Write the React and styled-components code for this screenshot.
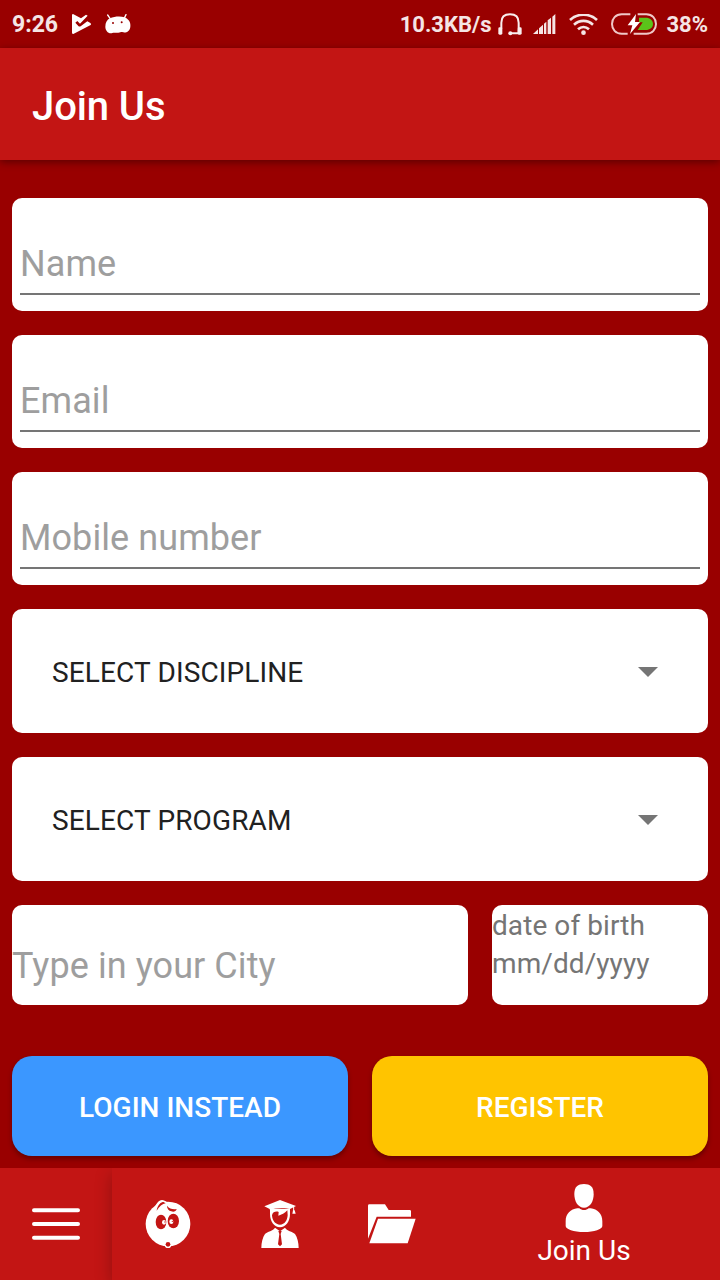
import React from "react";
import styled, { createGlobalStyle } from "styled-components";

const GlobalStyle = createGlobalStyle`
  * { box-sizing: border-box; }
  body { margin: 0; background: #990000; font-family: Roboto, "Liberation Sans", sans-serif; }
`;

const Screen = styled.div`
  width: 720px;
  height: 1280px;
  display: flex;
  flex-direction: column;
  background: #990000;
  overflow: hidden;
`;

const StatusBar = styled.header`
  height: 48px;
  flex: none;
  display: flex;
  align-items: center;
  padding: 2px 12px 0;
  color: #f5e5e5;
`;

const StatusText = styled.span`
  font-size: ${(p) => p.$size || 22}px;
  font-weight: 700;
  line-height: 28px;
  white-space: nowrap;
  margin-left: ${(p) => p.$gap || 0}px;
`;

const StatusGroup = styled.div`
  display: flex;
  align-items: center;
  margin-left: ${(p) => (p.$end ? "auto" : "0")};
`;

const StatusIcon = styled.svg`
  display: block;
  flex: none;
  margin-top: -2px;
  margin-left: ${(p) => p.$gap}px;
`;

const AppBar = styled.div`
  position: relative;
  height: 112px;
  flex: none;
  display: flex;
  align-items: center;
  padding: 6px 32px 0;
  background: #c31514;
  box-shadow: 0 2px 8px rgba(0, 0, 0, 0.42);
`;

const Title = styled.h1`
  margin: 0;
  font-size: 40px;
  line-height: 48px;
  font-weight: 500;
  letter-spacing: -0.1px;
  color: #fff;
`;

const Form = styled.main`
  flex: 1;
  display: flex;
  flex-direction: column;
  gap: 24px;
  padding: 38px 12px 12px;
`;

const Card = styled.div`
  background: #fff;
  border-radius: 10px;
`;

const Field = styled(Card)`
  height: 113px;
  padding: 45px 8px 0;
`;

const Hint = styled.div`
  font-size: 36px;
  line-height: 42px;
  letter-spacing: 0.08px;
  color: #9e9e9e;
  white-space: nowrap;
`;

const UnderlinedHint = styled(Hint)`
  height: 52px;
  border-bottom: 2px solid #757575;
`;

const Select = styled(Card)`
  height: 124px;
  display: flex;
  align-items: center;
  justify-content: space-between;
  padding: 0 50px 0 40px;
  font-size: 28px;
  line-height: 34px;
  letter-spacing: 0.13px;
  color: #212121;
`;

const SelectLabel = styled.span`
  padding-top: 4px;
`;

const Caret = styled.svg`
  display: block;
  margin-top: 2px;
`;

const Row = styled.div`
  display: flex;
  gap: 24px;
`;

const CityField = styled(Card)`
  width: 456px;
  height: 100px;
  padding-top: 40px;
`;

const DateField = styled(Card)`
  flex: 1;
  height: 100px;
  padding-top: 2px;
  font-size: 28px;
  line-height: 38px;
  letter-spacing: 0.08px;
  color: #757575;
`;

const Actions = styled(Row)`
  margin-top: 27px;
`;

const ActionButton = styled.button`
  flex: 1;
  height: 100px;
  padding: 3px 0 0;
  border: 0;
  border-radius: 20px;
  background: ${(p) => p.$color};
  box-shadow: 0 3px 5px rgba(0, 0, 0, 0.32);
  color: #fff;
  font-family: inherit;
  font-size: 28px;
  font-weight: 500;
  line-height: 34px;
`;

const BottomBar = styled.nav`
  position: relative;
  height: 112px;
  flex: none;
  display: flex;
  background: #c31514;
  color: #fff;
  overflow: hidden;
`;

const MenuButton = styled.div`
  width: 112px;
  display: flex;
  align-items: center;
  justify-content: center;
`;

const Tabs = styled.div`
  flex: 1;
  display: flex;
  background: #c31514;
  box-shadow: 0 6px 16px rgba(0, 0, 0, 0.26);
`;

const Tab = styled.div`
  width: ${(p) => (p.$active ? "272px" : "112px")};
  display: flex;
  flex-direction: column;
  align-items: center;
  justify-content: ${(p) => (p.$active ? "flex-start" : "center")};
  padding-top: ${(p) => (p.$active ? "16px" : "0")};
`;

const TabLabel = styled.span`
  margin-top: 2px;
  font-size: 28px;
  line-height: 34px;
`;

const TabIcon = styled.svg.attrs({ width: 48, height: 48, viewBox: "0 0 144 144" })`
  display: block;
  overflow: visible;
`;

const RED = "#c31514";

const SelectBox = ({ label }) => (
  <Select>
    <SelectLabel>{label}</SelectLabel>
    <Caret width="20" height="10" viewBox="0 0 20 10">
      <path d="M0 0H20L10 10Z" fill="#757575" />
    </Caret>
  </Select>
);

const TextField = ({ label }) => (
  <Field>
    <UnderlinedHint>{label}</UnderlinedHint>
  </Field>
);

export default function App() {
  return (
    <>
      <GlobalStyle />
      <Screen>
        <StatusBar>
          <StatusGroup>
            <StatusText $size={23}>9:26</StatusText>
            <StatusIcon $gap={14} width="20" height="20" viewBox="0 0 60 60">
              <path
                d="M3 0Q0 0 0 4V56Q0 60 4 60L56 33Q59 30 55 27L46 22L26 37Q22 39 19 36L10 26L16 21L24 29L47 5L42 2L27 13Z"
                fill="#fff"
              />
            </StatusIcon>
            <StatusIcon $gap={13} width="26" height="20" viewBox="0 0 78 60">
              <path
                d="M8 3L15 13M63 2L58 12"
                stroke="#fff"
                strokeWidth="4"
                strokeLinecap="round"
              />
              <path
                d="M15 13C28 7 47 6 58 10C70 14 78 25 76 38C75 50 65 57 54 55C50 53 47 55 40 56C30 57 27 55 22 57C10 60 1 50 1 38C1 26 6 17 15 13Z"
                fill="#fff"
              />
              <circle cx="24" cy="27" r="3" fill="#990000" />
              <circle cx="50" cy="25" r="3" fill="#990000" />
            </StatusIcon>
          </StatusGroup>
          <StatusGroup $end>
            <StatusText>10.3KB/s</StatusText>
            <StatusIcon $gap={7} width="24" height="23" viewBox="0 0 72 69">
              <path
                d="M10 47V29C10 13 20 4 36 4S62 13 62 29V47M62 49V61H38"
                fill="none"
                stroke="#f9eeee"
                strokeWidth="6"
              />
              <rect x="1" y="43" width="12" height="22" rx="4" fill="#f9eeee" />
              <rect x="59" y="43" width="12" height="22" rx="4" fill="#f9eeee" />
              <circle cx="37" cy="61" r="6" fill="#f9eeee" />
            </StatusIcon>
            <StatusIcon $gap={11} width="23" height="20" viewBox="0 0 69 60">
              <path
                d="M0 60L15 46V60ZM18 43L30 32V60H18ZM33 29L40 23V60H33ZM44 19L54 11V60H44ZM58 8L67 0V60H58Z"
                fill="#f5e5e5"
              />
            </StatusIcon>
            <StatusIcon $gap={13} width="29" height="21" viewBox="0 0 87 63">
              <path
                d="M3 18C26 -3 61 -3 84 18M15 32C32 17 55 17 72 32M27 46C37 37 50 37 60 46"
                fill="none"
                stroke="#f5e5e5"
                strokeWidth="8"
              />
              <circle cx="43.5" cy="56" r="7" fill="#f5e5e5" />
            </StatusIcon>
            <StatusIcon $gap={13} width="46" height="22" viewBox="0 0 138 66">
              <path
                d="M58 4H32C14 4 3 17 3 33S14 62 32 62H50M80 4H106C124 4 135 17 135 33S124 62 106 62H68"
                fill="none"
                stroke="#f0c8c8"
                strokeWidth="6"
              />
              <path d="M84 14H104C117 14 126 22 126 33S117 51 104 51H80L95 28H84Z" fill="#5bc41a" />
              <path d="M75 3L50 37H64L57 63L87 27H72Z" fill="#fff" />
            </StatusIcon>
            <StatusText $gap={9}>38%</StatusText>
          </StatusGroup>
        </StatusBar>

        <AppBar>
          <Title>Join Us</Title>
        </AppBar>

        <Form>
          <TextField label="Name" />
          <TextField label="Email" />
          <TextField label="Mobile number" />
          <SelectBox label="SELECT DISCIPLINE" />
          <SelectBox label="SELECT PROGRAM" />
          <Row>
            <CityField>
              <Hint>Type in your City</Hint>
            </CityField>
            <DateField>
              <div>date of birth</div>
              <div>mm/dd/yyyy</div>
            </DateField>
          </Row>
          <Actions>
            <ActionButton $color="#3b97ff">LOGIN INSTEAD</ActionButton>
            <ActionButton $color="#ffc400">REGISTER</ActionButton>
          </Actions>
        </Form>

        <BottomBar>
          <MenuButton>
            <TabIcon>
              <path
                d="M6 31H138M6 72H138M6 113H138"
                stroke="#fff"
                strokeWidth="12"
                strokeLinecap="round"
              />
            </TabIcon>
          </MenuButton>
          <Tabs>
            <Tab>
              <TabIcon>
                <circle cx="72" cy="72" r="67" fill="#fff" />
                <path d="M27 30C36 12 44 0 54 0C60 0 64 3 69 6L60 20Z" fill="#fff" />
                <path d="M38 32C40 19 47 8 56 6C60 6 62 8 65 10C55 11 46 20 38 32Z" fill={RED} />
                <path d="M69 17C77 27 87 29 98 27C96 34 89 37 82 34C74 32 69 26 69 17Z" fill={RED} />
                <ellipse cx="51" cy="66" rx="16" ry="22" fill={RED} />
                <ellipse cx="88" cy="63" rx="17" ry="22" fill={RED} />
                <ellipse cx="60" cy="67" rx="6" ry="7" fill="#fff" />
                <circle cx="63" cy="66" r="2" fill={RED} />
                <ellipse cx="82" cy="65" rx="6" ry="7" fill="#fff" />
                <circle cx="85" cy="64" r="2" fill={RED} />
                <circle cx="72" cy="134" r="10" fill="#fff" />
                <circle cx="72" cy="133" r="7" fill={RED} />
              </TabIcon>
            </Tab>
            <Tab>
              <TabIcon>
                <path
                  fill="#fff"
                  fillRule="evenodd"
                  d="M42 26H102V42C102 64 89 82 72 82S42 64 42 42ZM48 46C49 62 58 74 72 74S94 61 95 46L94 31C86 40 77 44 67 47L68 36C61 33 50 35 48 46Z"
                />
                <path d="M72 0L120 18L102 27C88 22 57 22 42 31L41 27L25 19Z" fill="#fff" />
                <path d="M113 20V34" stroke="#fff" strokeWidth="3" />
                <path d="M111 31H116L119 41H109Z" fill="#fff" />
                <path
                  d="M57 83L72 94L87 83C92 92 110 95 117 102C124 112 128 128 128 144H16C16 128 20 112 27 102C34 95 52 92 57 83Z"
                  fill="#fff"
                />
                <path d="M67 93H77L74 102L78 133L72 139L66 133L70 102Z" fill={RED} />
              </TabIcon>
            </Tab>
            <Tab>
              <TabIcon>
                <path
                  d="M0 17Q0 13 4 13H51L62 30H125Q129 30 129 34V50H26L0 116Z"
                  fill="#fff"
                />
                <path d="M30 56H143L119 130H4Z" fill="#fff" />
              </TabIcon>
            </Tab>
            <Tab $active>
              <TabIcon>
                <path
                  d="M72 0C90 0 101 8 101 30C101 53 90 71 72 71S43 53 43 30C43 8 54 0 72 0Z"
                  fill="#fff"
                />
                <path
                  d="M52 73H58C65 80 79 80 86 73H92C112 76 127 89 127 112V126C127 136 103 144 72 144S17 136 17 126V112C17 89 32 76 52 73Z"
                  fill="#fff"
                />
              </TabIcon>
              <TabLabel>Join Us</TabLabel>
            </Tab>
          </Tabs>
        </BottomBar>
      </Screen>
    </>
  );
}
